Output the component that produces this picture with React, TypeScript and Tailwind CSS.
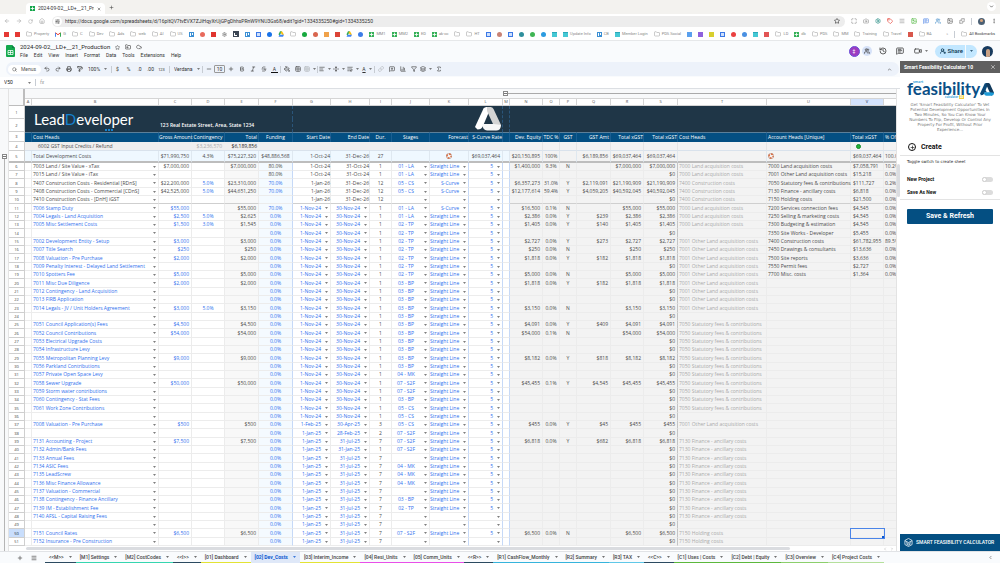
import React from 'react';
import {
  AlignLeft, ArrowLeft, ArrowRight, BarChart3, Bold, Camera, ChevronDown, ChevronLeft, ChevronUp, CloudCheck, Filter,
  Folder, FolderInput, Grid2x2, History, Home, Image, Italic, Layers, Link, Maximize, Menu, MessageSquareText, Minus,
  MoreVertical, PaintBucket, PaintRoller, Plus, Printer, Puzzle, Redo2, RotateCw, Search, Settings, Sigma, SlidersHorizontal,
  Star, Strikethrough, TableCellsMerge, Undo2, UserRoundPlus, Users, Video, WrapText, X, MessageSquarePlus, FoldVertical, Tag,
} from 'lucide-react';

type IconType = React.ComponentType<{ className?: string; strokeWidth?: number }>;

/* ---------- sheet data ---------- */

const LA = '7000 Land acquisition costs';
const OTHER = '7001 Other Land acquisition costs';
const STAT = '7050 Statutory fees & contributions';
const FIN = '7130 Finance - ancillary costs';
const HOLD = '7150 Holding costs';
const CON = '7400 Construction costs';

// name, gross, contingency, total, stage, cost head, [equity, tdc, gst, gst amt, total]
type Row = [string, string, string, string, string, string, string[]?];

const rows: Row[] = [
  ['7003 Land / Site Value - xTax', '$7,000,000', '', '$7,000,000', '01 - LA', LA, ['$1,400,000', '9.3%', 'N', '', '$7,000,000']],
  ['7015 Land / Site Value - iTax', '', '', '', '01 - LA', LA],
  ['7407 Construction Costs - Residential [RDnS]', '$22,200,000', '5.0%', '$23,310,000', '05 - CS', CON, ['$6,357,273', '31.0%', 'Y', '$2,119,091', '$21,190,909']],
  ['7408 Construction Costs - Commercial [CDnS]', '$42,525,000', '5.0%', '$44,651,250', '05 - CS', CON, ['$12,177,614', '59.4%', 'Y', '$4,059,205', '$40,592,045']],
  ['7410 Construction Costs - [DnH] iGST', '', '', '', '', CON],
  ['7006 Stamp Duty', '$55,000', '', '$55,000', '01 - LA', LA, ['$16,500', '0.1%', 'N', '', '$55,000']],
  ['7004 Legals - Land Acquisition', '$2,500', '5.0%', '$2,625', '01 - LA', LA, ['$2,386', '0.0%', 'Y', '$239', '$2,386']],
  ['7005 Misc Settlement Costs', '$1,500', '3.0%', '$1,545', '02 - TP', LA, ['$1,405', '0.0%', 'Y', '$140', '$1,405']],
  ['', '', '', '', '02 - TP', ''],
  ['7002 Development Entity - Setup', '$3,000', '', '$3,000', '02 - TP', OTHER, ['$2,727', '0.0%', 'Y', '$273', '$2,727']],
  ['7007 Title Search', '$250', '', '$250', '02 - TP', OTHER, ['$250', '0.0%', 'N', '', '$250']],
  ['7008 Valuation - Pre Purchase', '$2,000', '', '$2,000', '02 - TP', OTHER, ['$1,818', '0.0%', 'Y', '$182', '$1,818']],
  ['7009 Penalty Interest - Delayed Land Settlement', '', '', '', '02 - TP', OTHER],
  ['7010 Spotters Fee', '$5,000', '', '$5,000', '02 - TP', OTHER, ['$5,000', '0.0%', 'N', '', '$5,000']],
  ['7011 Misc Due Diligence', '$2,000', '', '$2,000', '03 - BP', OTHER, ['$1,818', '0.0%', 'Y', '$182', '$1,818']],
  ['7012 Contingency - Land Acquisition', '', '', '', '03 - BP', OTHER],
  ['7013 FIRB Application', '', '', '', '03 - BP', OTHER],
  ['7014 Legals - JV / Unit Holders Agreement', '$3,000', '5.0%', '$3,150', '03 - BP', OTHER, ['$3,150', '0.0%', 'N', '', '$3,150']],
  ['', '', '', '', '03 - BP', ''],
  ['7051 Council Application(s) Fees', '$4,500', '', '$4,500', '03 - BP', STAT, ['$4,091', '0.0%', 'Y', '$409', '$4,091']],
  ['7052 Council Contributions', '$54,000', '', '$54,000', '03 - BP', STAT, ['$54,000', '0.1%', 'N', '', '$54,000']],
  ['7053 Electrical Upgrade Costs', '', '', '', '03 - BP', STAT],
  ['7054 Infrastructure Levy', '', '', '', '03 - BP', STAT],
  ['7055 Metropolitan Planning Levy', '$9,000', '', '$9,000', '03 - BP', STAT, ['$8,182', '0.0%', 'Y', '$818', '$8,182']],
  ['7056 Parkland Contributions', '', '', '', '03 - BP', STAT],
  ['7057 Private Open Space Levy', '', '', '', '04 - MK', STAT],
  ['7058 Sewer Upgrade', '$50,000', '', '$50,000', '07 - S2F', STAT, ['$45,455', '0.1%', 'Y', '$4,545', '$45,455']],
  ['7059 Storm water contributions', '', '', '', '07 - S2F', STAT],
  ['7060 Contingency - Stat Fees', '', '', '', '03 - BP', STAT],
  ['7061 Work Zone Contributions', '', '', '', '05 - CS', STAT],
  ['', '', '', '', '05 - CS', ''],
  ['7008 Valuation - Pre Purchase', '$500', '', '$500', '05 - CS', OTHER, ['$455', '0.0%', 'Y', '$45', '$455']],
  ['', '', '', '', '07 - S2F', ''],
  ['7131 Accounting - Project', '$7,500', '', '$7,500', '07 - S2F', FIN, ['$6,818', '0.0%', 'Y', '$682', '$6,818']],
  ['7132 Admin/Bank Fees', '', '', '', '07 - S2F', FIN],
  ['7133 Annual Fees', '', '', '', '', FIN],
  ['7134 ASIC Fees', '', '', '', '04 - MK', FIN],
  ['7135 LeadScrew', '', '', '', '04 - MK', FIN],
  ['7136 Misc Finance Allowance', '', '', '', '04 - MK', FIN],
  ['7137 Valuation - Commercial', '', '', '', '', FIN],
  ['7138 Contingency - Finance Ancillary', '', '', '', '03 - BP', FIN],
  ['7139 IM - Establishment Fee', '', '', '', '02 - TP', FIN],
  ['7140 AFSL - Capital Raising Fees', '', '', '', '', FIN],
  ['', '', '', '', '', ''],
  ['7151 Council Rates', '$6,500', '', '$6,500', '07 - S2F', HOLD, ['$6,500', '0.0%', 'N', '', '$6,500']],
  ['7152 Insurance - Pre Construction', '', '', '', '', HOLD],
];

const accounts = [
  [LA, '$7,058,791', '10.2%'],
  [OTHER, '$15,218', '0.0%'],
  [STAT, '$111,727', '0.2%'],
  [FIN, '$6,818', '0.0%'],
  [HOLD, '$21,500', '0.0%'],
  ['7200 Services connection fees', '$4,545', '0.0%'],
  ['7250 Selling & marketing costs', '$4,545', '0.0%'],
  ['7300 Budgeting & estimation', '$4,545', '0.0%'],
  ['7350 Site Works - Developer', '$5,455', '0.0%'],
  [CON, '$61,782,955', '89.5%'],
  ['7450 Drawings & consultants', '$13,636', '0.0%'],
  ['7500 Site reports', '$3,636', '0.0%'],
  ['7550 Permit fees', '$2,727', '0.0%'],
  ['7700 Misc. costs', '$1,364', '0.0%'],
];

const schedule = (n: number): [string, string, string] => {
  if (n <= 7) return ['1-Oct-24', '31-Oct-24', '1'];
  if (n <= 10) return ['1-Jan-26', '31-Dec-26', '12'];
  if (n <= 36) return ['1-Nov-24', '30-Nov-24', '1'];
  if (n === 37) return ['1-Feb-25', '30-Apr-25', '3'];
  if (n === 38) return ['1-Jan-25', '28-Feb-25', '2'];
  if (n === 40) return ['1-Jan-25', '31-Jan-25', '1'];
  return ['1-Jan-25', '31-Jul-25', '7'];
};

const funding = (n: number) => (n <= 7 ? '80.0%' : n === 10 ? '' : n <= 11 ? '70.0%' : '0.0%');

const forecast = (n: number) => {
  if ([10, 48, 49, 51].includes(n)) return '';
  return [8, 9, 11].includes(n) ? 'S-Curve' : 'Straight Line';
};

const columns: [string, string][] = [
  ['A', 'w-[7px]'], ['B', 'w-[127px]'], ['C', 'w-[33px]'], ['D', 'w-[33px]'], ['E', 'w-[34px]'], ['F', 'w-[34px]'],
  ['G', 'w-[38px]'], ['H', 'w-[39px]'], ['I', 'w-[22px]'], ['J', 'w-[38px]'], ['K', 'w-[39px]'], ['L', 'w-[34px]'],
  ['M', 'w-[7px]'], ['N', 'w-[33px]'], ['O', 'w-[17px]'], ['P', 'w-[17px]'], ['Q', 'w-[34px]'], ['R', 'w-[33px]'],
  ['S', 'w-[34px]'], ['T', 'w-[89px]'], ['U', 'w-[84px]'], ['V', 'w-[33px]'], ['', 'w-[33px]'],
];

/* ---------- small pieces ---------- */

const Caret = ({ className = 'text-[#555]' }: { className?: string }) => (
  <svg viewBox="0 0 4 2" className={`w-[3px] h-[2px] shrink-0 ${className}`}><path d="M0 0h4L2 2z" fill="currentColor" /></svg>
);

const Sep = () => <span className="w-px h-[7px] bg-[#c7ccd3] shrink-0" />;

const Triangle = ({ className, light }: { className: string; light?: boolean }) => (
  <svg viewBox="0 0 52 48" className={className}>
    <path d="M0 40 L17 3 Q19 0 23 0 H32 L16 38 Q13 45 5 45 Z" fill={light ? '#ffffff' : '#0b4a7a'} />
    <path d="M24 0 H31 Q35 0 37 4 L52 36 L42 47 L24 8 Z" fill={light ? '#d4d4d4' : '#123a5c'} />
    <path d="M14 34 H38 L52 36 Q52 47 42 47 H24 Q16 47 14 34 Z" fill={light ? '#f7f7f7' : '#1d9ad6'} />
    {light ? null : <path d="M2 45 L14 20 L26 34 H14 Q12 45 2 45 Z" fill="#0b4a7a" />}
  </svg>
);

const Lifebuoy = () => (
  <svg viewBox="0 0 24 24" className="size-[6px] inline-block">
    <circle cx="12" cy="12" r="8" fill="none" stroke="#f3e3da" strokeWidth="6" />
    <circle cx="12" cy="12" r="8" fill="none" stroke="#dd6a3c" strokeWidth="6" strokeDasharray="7 5.500" strokeDashoffset="3.500" />
    <circle cx="12" cy="12" r="11" fill="none" stroke="#9c6a55" strokeWidth="1.500" />
  </svg>
);

const SheetsLogo = ({ className }: { className: string }) => (
  <svg viewBox="0 0 18 24" className={className}>
    <path d="M2 0h10l6 6v16a2 2 0 0 1-2 2H2a2 2 0 0 1-2-2V2a2 2 0 0 1 2-2z" fill="#12a84c" />
    <path d="M12 0l6 6h-6z" fill="#0b8043" />
    <path d="M4 11h10v8H4zM4 15h10M9 11v8" fill="none" stroke="#fff" strokeWidth="1.500" />
  </svg>
);

/* ---------- browser chrome ---------- */

const TabStrip = () => (
  <div className="h-[14px] bg-[#f3f2ef] flex items-end pl-[26px] pr-1 shrink-0">
    <div className="h-[11px] w-[79px] bg-white rounded-t-[4px] flex items-center gap-[3px] px-1 text-[5px] leading-none text-[#333]">
      <span className="w-[5px] h-[5px] bg-[#14a54a] flex items-center justify-center shrink-0"><Plus className="size-[5px] text-white" strokeWidth={4} /></span>
      <span className="flex-1 overflow-hidden whitespace-nowrap">2024-09-02__LD+__21_Prod</span>
      <button aria-label="Close tab"><X className="size-[4px]" strokeWidth={3} /></button>
    </div>
    <button aria-label="New tab" className="mb-[4px] ml-[4px]"><Plus className="size-[5px] text-[#444]" strokeWidth={2.5} /></button>
    <button aria-label="Search tabs" className="ml-auto mb-[3px] size-[9px] rounded-full bg-white flex items-center justify-center"><ChevronDown className="size-[5px] text-[#333]" strokeWidth={3} /></button>
  </div>
);

const extensions: [IconType, string][] = [
  [Maximize, 'text-[#888]'], [Camera, 'text-[#999]'], [Settings, 'text-[#2c8f86]'], [Tag, 'text-[#e5392f]'], [Menu, 'text-[#999]'],
  [Image, 'text-[#57b947]'], [MessageSquareText, 'text-[#5b8fe8]'], [Users, 'text-[#4a90c8]'], [Image, 'text-[#666]'], [Puzzle, 'text-[#777]'],
];

const AddressBar = () => (
  <div className="h-[14px] bg-white flex items-center shrink-0 pl-[4px] pr-[3px]">
    <div className="w-[48px] flex items-center gap-[6px] text-[#999]">
      <button aria-label="Back"><ArrowLeft className="size-[6px]" /></button>
      <button aria-label="Forward"><ArrowRight className="size-[6px]" /></button>
      <button aria-label="Reload"><RotateCw className="size-[5px]" /></button>
      <button aria-label="Home"><Home className="size-[6px]" /></button>
    </div>
    <div className="flex-1 h-[11px] rounded-full bg-[#ededed] flex items-center pl-[1px] pr-[5px] gap-[3px]">
      <span className="size-[9px] bg-white rounded-full flex items-center justify-center shrink-0"><SlidersHorizontal className="size-[5px] text-[#444]" strokeWidth={2.5} /></span>
      <input
        aria-label="Address"
        className="flex-1 min-w-0 text-[5px] leading-[7px] text-[#333] outline-none"
        defaultValue="https://docs.google.com/spreadsheets/d/16pItQV7tvEVX7ZJiHqyXrUjGPgDhhsPRnW9YNU3Gx68/edit?gid=1334335250#gid=1334335250"
      />
      <button aria-label="Bookmark"><Star className="size-[6px] text-[#333]" strokeWidth={2.5} /></button>
    </div>
    <div className="flex items-center gap-[6px] pl-[6px]">
      {extensions.map(([Icon, color], i) => (
        <button key={i} aria-label={`Extension ${i + 1}`}><Icon className={`size-[6px] ${color}`} strokeWidth={2.5} /></button>
      ))}
      <Sep />
      <span className="size-[7px] rounded-full bg-[#4b6074] flex items-start justify-center"><span className="size-[3px] rounded-full bg-[#d9a47c] mt-px" /></span>
      <button aria-label="Browser menu"><MoreVertical className="size-[6px] text-[#555]" /></button>
    </div>
  </div>
);

// [kind, label]; kind is "f" for a folder, "m" for mail, "+" for a sheet, or a favicon colour class
const bookmarks: [string, string][] = [
  ['bg-[#e53935]', ''], ['bg-[#e53935]', ''], ['f', 'Property'], ['m', 'G'], ['f', 'C'], ['f', 'Dev'], ['f', 'Ads'], ['f', 'web'], ['f', 'AI'],
  ['f', 'US'], ['t', ''], ['bg-[#e86a5c] rounded-full', ''], ['bg-[#e0342e]', ''], ['g', ''], ['l', ''], ['t', ''], ['d', ''],
  ['bg-[#1a73e8] rounded-full', ''], ['dr', ''], ['f', ''], ['bg-[#18a93f] rounded-full', ''], ['bg-[#d9664f] rounded-full', ''], ['bg-[#f0a24a]', ''],
  ['bg-[#dc4437]', ''], ['dr', ''], ['bg-[#3d7de8] rounded-full', ''], ['+', 'MM1'], ['+', 'MM2'], ['+', 'ED'], ['+', 'ak-cc'], ['f', ''],
  ['f', 'HT'], ['d', ''], ['bg-[#c98375] rounded-full', ''], ['d', ''], ['bg-[#2f8f9c] rounded-full', ''], ['bg-[#3fb554] rounded-full', ''],
  ['bg-[#2b9be0] rounded-full', ''], ['c', ''], ['c', 'Update Info'], ['t', 'CB'], ['c', 'Member Login'], ['f', 'PDS Social'],
  ['bg-[#5aa0ee]', ''], ['bg-[#8f62dd]', ''], ['bg-[#d8cf2e]', ''], ['d', ''], ['bg-[#ea4040] rounded-full', ''], ['bg-[#4a90e2] rounded-full', ''], ['c', ''],
  ['bg-[#e25555]', ''], ['f', 'LD'], ['+', 'db'], ['f', 'PDS'], ['f', 'MM'], ['f', 'Training'], ['f', 'Travel'], ['bg-[#d8574c]', ''], ['f', 'BA'],
];

const Favicon = ({ kind }: { kind: string }) => {
  if (kind === 'f') return <Folder className="size-[6px] text-[#999]" strokeWidth={2} />;
  if (kind === 'g') return <Settings className="size-[5px] text-[#777]" strokeWidth={3} />;
  if (kind === 'm') {
    return (
      <svg viewBox="0 0 12 10" className="w-[6px] h-[5px]">
        <path d="M1 9.500V1.500" stroke="#4285f4" strokeWidth="2" />
        <path d="M1 1.500l5 4 5-4" fill="none" stroke="#ea4335" strokeWidth="2" />
        <path d="M11 9.500V1.500" stroke="#34a853" strokeWidth="2" />
      </svg>
    );
  }
  if (kind === 'dr') {
    return (
      <svg viewBox="0 0 12 11" className="w-[6px] h-[6px]">
        <path d="M4 0h4L3 9 1 6z" fill="#34a853" /><path d="M8 0l4 7H8L5 2z" fill="#fbbc04" /><path d="M3 7h9l-2 4H1z" fill="#4285f4" />
      </svg>
    );
  }
  if (kind === '+') return <span className="size-[5px] bg-[#35b057] flex items-center justify-center"><Plus className="size-[5px] text-white" strokeWidth={4} /></span>;
  if (kind === 'l') return <span className="size-[6px] bg-[#3c4654] flex items-center justify-center"><span className="size-[3px] border-l border-b border-white" /></span>;
  if (kind === 't') return <span className="size-[5px] bg-[#3b8fd4] border border-[#3b8fd4] flex gap-px"><span className="w-px h-[3px] bg-white" /><span className="w-px h-[2px] bg-white" /></span>;
  if (kind === 'd') return <span className="size-[5px] bg-[#cfe0fb] border border-[#3c78e6]" />;
  if (kind === 'c') return <span className="size-[5px] bg-[#45c8d4] border-t border-[#2ba7b8]" />;
  return <span className={`size-[5px] ${kind}`} />;
};

const BookmarkBar = () => (
  <nav className="h-[13px] bg-white border-b border-[#e6e8ea] flex items-center shrink-0 pl-[4px] pr-[5px] text-[4px] leading-none text-[#888]">
    <div className="flex-1 flex items-center justify-between">
      {bookmarks.map(([kind, label], i) => (
        <a key={i} href="#" aria-label={label || `Bookmark ${i + 1}`} className="flex items-center gap-[2px] whitespace-nowrap">
          <Favicon kind={kind} />
          {label && <span>{label}</span>}
        </a>
      ))}
    </div>
    <div className="pl-[14px] flex items-center gap-[6px]">
      <span>»</span>
      <Sep />
      <a href="#" className="flex items-center gap-[2px] text-[#444]"><Favicon kind="f" />All Bookmarks</a>
    </div>
  </nav>
);

/* ---------- sheets header ---------- */

const DocHeader = () => (
  <header className="h-[20px] flex items-center shrink-0 pl-[6px] pr-[7px]">
    <SheetsLogo className="w-[9px] h-[12px] mr-[5px]" />
    <div>
      <div className="flex items-center gap-[5px] h-[8px] text-[#444]">
        <h1 className="text-[6px] leading-[8px] text-[#1f1f1f]">2024-09-02__LD+__21_Production</h1>
        <Star className="size-[5px]" strokeWidth={2.5} /><FolderInput className="size-[6px]" strokeWidth={2.5} /><CloudCheck className="size-[6px]" strokeWidth={2.5} />
      </div>
      <div className="flex gap-[6px] text-[5px] leading-[8px] text-[#333]">
        {['File', 'Edit', 'View', 'Insert', 'Format', 'Data', 'Tools', 'Extensions', 'Help'].map(m => <button key={m}>{m}</button>)}
      </div>
    </div>
    <div className="ml-auto flex items-center">
      <span className="size-[11px] rounded-full bg-[#9c3cc0] border border-[#6a4fd8] text-white text-[5px] leading-none flex items-center justify-center">‡</span>
      <button aria-label="Active users" className="size-[10px] ml-[2px] rounded-full bg-[#d6e2f8] flex items-center justify-center"><Users className="size-[6px] text-[#444]" strokeWidth={3} /></button>
      <button aria-label="History" className="ml-[7px]"><History className="size-[8px] text-[#444]" strokeWidth={2.5} /></button>
      <button aria-label="Comments" className="ml-[9px]"><MessageSquareText className="size-[8px] text-[#444]" strokeWidth={2.5} /></button>
      <button aria-label="Call" className="ml-[10px] flex items-center gap-[3px]"><Video className="size-[8px] text-[#444]" strokeWidth={2.5} /><Caret /></button>
      <div className="ml-[7px] h-[13px] rounded-full bg-[#c2e7ff] flex items-center overflow-hidden text-[#0a3550]">
        <button className="h-full pl-[5px] pr-[2px] flex items-center gap-[2px] text-[6px] leading-none font-medium border-r border-[#f9fbfd]"><UserRoundPlus className="size-[6px]" strokeWidth={3} />Share</button>
        <button aria-label="Share options" className="h-full px-[4px]"><Caret className="text-[#0a3550]" /></button>
      </div>
      <span className="ml-[5px] size-[11px] rounded-full bg-[#173a5e] flex items-end justify-center overflow-hidden"><span className="w-[4px] h-[8px] rounded-t-full bg-[#c9a184]" /></span>
    </div>
  </header>
);

const Tool = ({ icon: Icon, label, caret, dim }: { icon: IconType; label: string; caret?: boolean; dim?: boolean }) => (
  <button aria-label={label} className={`h-[11px] flex items-center justify-center gap-[3px] shrink-0 ${caret ? 'w-[14px]' : 'w-[11px]'} ${dim ? 'text-[#b0b4b9]' : 'text-[#444]'}`}>
    <Icon className="size-[6px]" strokeWidth={2.5} />
    {caret && <Caret />}
  </button>
);

const TextTool = ({ children, label }: { children: React.ReactNode; label: string }) => (
  <button aria-label={label} className="w-[11px] text-center text-[5px] leading-none text-[#333]">{children}</button>
);

const Toolbar = () => (
  <div className="h-[14px] bg-[#edf2fa] rounded-full ml-[6px] mr-px mb-px flex items-center shrink-0 pl-[2px] pr-[7px]">
    <button className="h-[9px] w-[33px] rounded-full bg-white flex items-center gap-[4px] pl-[4px] text-[5px] leading-none text-[#555]"><Search className="size-[5px]" strokeWidth={2.5} />Menus</button>
    <Tool icon={Undo2} label="Undo" />
    <Tool icon={Redo2} label="Redo" />
    <Tool icon={Printer} label="Print" />
    <Tool icon={PaintRoller} label="Paint format" />
    <label className="w-[24px] flex items-center pl-[3px]">
      <select aria-label="Zoom" className="appearance-none w-[16px] text-[5px] leading-[7px] text-[#333]"><option>100%</option></select>
      <Caret />
    </label>
    <span className="w-[2px]" /><Sep />
    <TextTool label="Currency">$</TextTool>
    <TextTool label="Percent">%</TextTool>
    <TextTool label="Decrease decimals">.0</TextTool>
    <TextTool label="Increase decimals">.00</TextTool>
    <TextTool label="More formats"><span className="text-[4px]">123</span></TextTool>
    <span className="w-[2px]" /><Sep />
    <label className="w-[32px] flex items-center pl-[4px]">
      <select aria-label="Font" className="appearance-none w-[23px] text-[5px] leading-[7px] text-[#333]"><option>Verdana</option></select>
      <Caret />
    </label>
    <Sep />
    <Tool icon={Minus} label="Decrease font size" />
    <input aria-label="Font size" defaultValue="10" className="w-[11px] h-[8px] border border-[#999] rounded-[1px] text-center text-[5px] leading-none text-[#333]" />
    <Tool icon={Plus} label="Increase font size" />
    <Tool icon={Bold} label="Bold" />
    <Tool icon={Italic} label="Italic" />
    <Tool icon={Strikethrough} label="Strikethrough" />
    <button aria-label="Text color" className="w-[11px] flex justify-center text-[5px] leading-[6px] text-[#333]"><span className="px-[2px] border-b border-[#111]">A</span></button>
    <Sep />
    <Tool icon={PaintBucket} label="Fill color" />
    <Tool icon={Grid2x2} label="Borders" />
    <Tool icon={TableCellsMerge} label="Merge" caret dim />
    <Sep />
    <Tool icon={AlignLeft} label="Horizontal align" caret />
    <Tool icon={FoldVertical} label="Vertical align" caret />
    <Tool icon={WrapText} label="Wrap" caret />
    <button aria-label="Rotate text" className="w-[14px] flex items-center justify-center gap-[3px] text-[5px] leading-none text-[#333]"><span className="underline">A</span><Caret /></button>
    <Sep />
    <Tool icon={Link} label="Link" dim />
    <Tool icon={MessageSquarePlus} label="Comment" />
    <Tool icon={BarChart3} label="Chart" />
    <Tool icon={Filter} label="Filter" />
    <Tool icon={Layers} label="Views" caret />
    <Tool icon={Sigma} label="Functions" />
    <button aria-label="Hide menus" className="ml-auto"><ChevronUp className="size-[5px] text-[#333]" strokeWidth={2.5} /></button>
  </div>
);

const FormulaBar = () => (
  <div className="h-[12px] bg-white border-b border-[#dcdfe3] flex items-center shrink-0 pl-[4px] text-[5px] leading-none text-[#222]">
    <input aria-label="Name box" defaultValue="V50" className="w-[24px] text-[5px] leading-[7px]" />
    <Caret />
    <span className="w-[4px]" /><Sep />
    <label htmlFor="fx" className="pl-[4px] italic text-[#999]">fx</label>
    <input id="fx" aria-label="Formula" className="flex-1 ml-[4px] text-[5px]" />
  </div>
);

/* ---------- grid ---------- */

const line = 'border-r border-b border-[#ececec]';
const guide = 'border-b border-b-[#ececec] border-r border-r-[#c6d9f7]';
const blue = 'text-[#2f70ee]';

const RowHead = ({ n, className = '' }: { n: number; className?: string }) => (
  <th scope="row" className={`border-r border-b border-[#cfcfcf] text-[4px] font-medium text-center ${n === 50 ? 'bg-[#c9defc] text-[#123]' : 'bg-white text-[#444]'} ${className}`}>{n}</th>
);

const Drop = ({ text = '', label, align = 'justify-end' }: { text?: string; label: string; align?: string }) => (
  <button aria-label={text ? undefined : label} className={`w-full flex items-center pr-[2px] ${blue}`}>
    <span className={`flex-1 flex whitespace-nowrap ${align}`}>{text}</span>
    <span className="w-[7px] flex justify-end"><Caret /></span>
  </button>
);

const SheetRow = ({ row, n, index }: { row: Row; n: number; index: number }) => {
  const [name, gross, contingency, total, stage, head, gst = ['', '', '', '', '$0']] = row;
  const [start, end, duration] = schedule(n);
  const plan = forecast(n);
  const [account = '', amount = '', share = ''] = accounts[index] || [];
  const fixed = n <= 10;
  const grey = 'bg-[#f3f3f3]';
  const edge = n === 10 ? 'border-b-[#cfcfcf]' : '';
  return (
    <tr className={index % 3 === 2 ? 'h-[9px]' : 'h-[8px]'}>
      <RowHead n={n} />
      <td className={`${line} ${edge}`} />
      <td className={`${line} ${edge} pl-px`}>
        <button className="w-full flex items-center justify-between pr-[2px]" aria-label={name ? undefined : 'Choose cost head'}>
          <span className={`whitespace-nowrap ${fixed ? '' : blue}`}>{name}</span><Caret />
        </button>
      </td>
      <td className={`${line} ${edge} text-right pr-[2px] ${fixed ? '' : blue}`}>{gross}</td>
      <td className={`${line} ${edge} text-center ${blue}`}>{contingency}</td>
      <td className={`${line} ${edge} text-right pr-[2px] bg-[#f8f8f8]`}>{total}</td>
      <td className={`${guide} ${edge} text-center bg-[#f4faff] ${n <= 7 ? '' : blue}`}>{funding(n)}</td>
      <td className={`${line} ${edge} text-right`}>{fixed ? start : <Drop text={start} label="Start date" />}</td>
      <td className={`${line} ${edge} text-right`}>{fixed ? end : <Drop text={end} label="End date" />}</td>
      <td className={`${line} ${edge} text-center`}>{duration}</td>
      <td className={`${line} ${edge}`}><Drop text={stage} label="Stage" align="justify-center" /></td>
      <td className={`${guide} ${edge}`}><Drop text={plan} label="Forecast" /></td>
      <td className={`${guide} ${edge}`}><Drop text={plan && '5'} label="S-Curve rate" /></td>
      <td className={guide} />
      <td className={`${line} ${edge} ${grey} text-right pr-[2px]`}>{gst[0]}</td>
      <td className={`${line} ${edge} ${grey} text-center`}>{gst[1]}</td>
      <td className={`${line} ${edge} ${grey} text-center`}>{gst[2]}</td>
      <td className={`${line} ${edge} ${grey} text-right pr-[2px]`}>{gst[3]}</td>
      <td className={`${line} ${edge} ${grey} text-right pr-[2px]`}>{gst[4] === '$0' ? '' : gst[4]}</td>
      <td className={`${line} ${edge} ${grey} text-right pr-[2px] border-r-[#c4c4c4]`}>{gst[4]}</td>
      <td className={`${line} ${edge} ${grey} pl-px text-[#a9a9a9]`}>{head}</td>
      <td className={`${line} ${edge} ${grey} pl-px`}>{account}</td>
      <td className={`${line} ${edge} ${grey} pl-[2px] ${n === 50 ? 'outline outline-[#4a84e8] relative' : ''}`}>
        {amount}
        {n === 50 && <span className="absolute -right-px -bottom-px size-[2px] bg-[#0b57d0]" />}
      </td>
      <td className={`${line} ${edge} ${grey} pl-px`}>{share}</td>
    </tr>
  );
};

const headings: [string, string][] = [
  ['', ''], ['Cost Heads', 'pl-px'], ['Gross Amount', 'text-right'], ['Contingency', 'text-center'], ['Total', 'text-right pr-px'], ['Funding', 'text-center'],
  ['Start Date', 'text-right'], ['End Date', 'text-right'], ['Dur.', 'text-center'], ['Stages', 'text-center'], ['Forecast', 'text-right'], ['S-Curve Rate', 'text-right'],
  ['', ''], ['Dev. Equity', 'text-right pr-px'], ['TDC %', 'text-center'], ['GST', 'text-center'], ['GST Amt', 'text-right pr-px'], ['Total xGST', 'text-right'],
  ['Total xGST', 'text-right'], ['Cost Heads', 'pl-px'], ['Account Heads [Unique]', 'pl-px'], ['Total xGST', 'pl-px'], ['% Of', 'pl-px'],
];

const totals: [React.ReactNode, string][] = [
  ['', ''], ['Total Development Costs', 'pl-px'], ['$71,990,750', 'text-right pr-[2px]'], ['4.3%', 'text-center'], ['$75,227,320', 'text-right pr-[2px]'],
  ['$48,886,568', 'text-center'], ['1-Oct-24', 'text-right'], ['31-Dec-26', 'text-right'], ['27', 'text-center'], ['', ''], [<Lifebuoy />, 'text-center'],
  ['$69,037,464', 'text-right pr-[2px]'], ['', ''], ['$20,150,895', 'text-right pr-[2px]'], ['100%', 'text-center'], ['', ''], ['$6,189,856', 'text-right pr-[2px]'],
  ['$69,037,464', 'text-right pr-[2px]'], ['$69,037,464', 'text-right pr-[2px]'], ['', ''], [<Lifebuoy />, 'pl-px'], ['$69,037,464', 'pl-[2px]'], ['100.0%', 'pl-px'],
];

const credits: Record<number, [React.ReactNode, string]> = {
  1: ['6002 GST Input Credits / Refund', 'pl-[6px]'],
  3: ['$3,236,570', 'text-right pr-[3px] text-[#aaa]'],
  4: ['$6,189,856', 'text-right pr-[2px] text-[#222]'],
  21: [<span className="block size-[5px] rounded-full bg-[#23b33a] border border-[#118a26]" />, 'pl-[5px]'],
};

const Sheet = () => (
  <table className="table-fixed w-[908px] border-separate border-spacing-0 bg-white text-[5px] leading-[7px] text-[#4a4a4a] font-['Open_Sans','DejaVu_Sans',sans-serif] [&_td]:whitespace-nowrap [&_td]:align-middle [&_svg]:align-middle">
    <colgroup>
      <col className="w-[16px]" />
      {columns.map(([, width], i) => <col key={i} className={width} />)}
    </colgroup>
    <thead>
      <tr className="h-[8px] text-[4px] leading-[6px] text-[#555]">
        <th className="bg-[#f8f9fa] border-r-2 border-b border-[#bdbdbd]" />
        {columns.map(([id], i) => (
          <th key={i} className={`font-medium border-r border-y border-[#d5d5d5] ${id === 'V' ? 'bg-[#d3e3fd] text-[#123]' : 'bg-white'}`}>{id}</th>
        ))}
      </tr>
    </thead>
    <tbody>
      <tr className="h-[13px] bg-[#1f3647]">
        <RowHead n={1} />
        <td rowSpan={2} />
        <td rowSpan={2} className="relative">
          <div className="text-[15px] leading-[18px] text-white pl-[2px] font-['Lato','Open_Sans',sans-serif]">Lead<span className="text-[#1583d0]">D</span>eveloper</div>
          <div className="absolute left-[73px] bottom-[1px] flex gap-px"><i className="size-[2px] bg-[#1583d0]" /><i className="size-[2px] bg-[#1583d0]" /><i className="size-[2px] bg-[#1583d0]" /></div>
        </td>
        <td colSpan={4} className="border-r border-dashed border-[#2a557a]" />
        <td colSpan={6} rowSpan={2} className="border-r border-dashed border-[#2a557a]"><Triangle light className="w-[26px] h-[24px] ml-auto mr-px" /></td>
        <td rowSpan={2} className="border-r border-dashed border-[#2a557a]" />
        <td colSpan={10} rowSpan={2} />
      </tr>
      <tr className="h-[13px] bg-[#1f3647]">
        <RowHead n={2} />
        <td colSpan={4} className="pl-px text-white font-semibold border-r border-dashed border-[#2a557a]">123 Real Estate Street, Area, State 1234</td>
      </tr>
      <tr className="h-[10px] bg-[#044f82] text-white">
        <RowHead n={3} />
        {headings.map(([text, cls], i) => <td key={i} className={`font-medium border-t border-t-[#5b7f99] border-r border-r-[#1a5f92] ${cls}`}>{text}</td>)}
      </tr>
      <tr className="h-[9px] bg-[#efefef]">
        <RowHead n={4} />
        {headings.map((_, i) => <td key={i} className={`border-b border-[#d9e2ec] ${i > 12 ? 'border-r border-r-[#e6e6e6] bg-[#f3f3f3]' : ''} ${credits[i]?.[1] || ''}`}>{credits[i]?.[0]}</td>)}
      </tr>
      <tr className="h-[12px] bg-[#eff8ff]">
        <RowHead n={5} className="border-b-2 border-b-[#bdbdbd]" />
        {totals.map(([text, cls], i) => <td key={i} className={`border-r border-r-[#dfe8f0] border-b-2 border-b-[#bdbdbd] ${i > 12 ? 'bg-[#f3f3f3]' : ''} ${cls}`}>{text}</td>)}
      </tr>
      {rows.map((row, i) => <SheetRow key={i} row={row} n={i + 6} index={i} />)}
    </tbody>
  </table>
);

const Fold = () => (
  <button aria-label="Collapse group" className="w-[5px] h-[5px] border border-[#888] bg-white flex items-center justify-center shrink-0"><span className="w-[3px] h-px bg-[#777]" /></button>
);

const Grid = () => (
  <div className="flex-1 min-h-0 flex bg-[#f8f9fa]">
    <div className="w-[9px] shrink-0 flex flex-col items-center border-r border-[#e3e3e3] pt-[65px]">
      <Fold />
      <span className="flex-1 w-px bg-[#b5b5b5]" />
    </div>
    <div className="flex-1 min-w-0 flex flex-col overflow-hidden">
      <div className="h-[9px] shrink-0 flex">
        <span className="w-[16px] border-r-2 border-[#bdbdbd]" />
        <div className="flex-1 flex items-center pl-[478px]"><Fold /><span className="flex-1 h-px bg-[#aaa]" /></div>
      </div>
      <div className="flex-1 min-h-0 overflow-hidden"><Sheet /></div>
      <div className="h-[5px] shrink-0 flex items-center bg-white pl-[17px] pr-[2px]">
        <span className="h-[3px] w-[88%] rounded-full bg-[#dadce0]" />
        <span className="ml-auto flex gap-[3px]"><ChevronLeft className="size-[4px] text-[#888]" /><ChevronLeft className="size-[4px] text-[#888] rotate-180" /></span>
      </div>
    </div>
    <div className="w-[4px] shrink-0 bg-white border-l border-[#e3e3e3] pt-[75px]">
      <div className="w-[3px] h-[33px] rounded-full bg-[#dadce0]" />
    </div>
  </div>
);

const sheetTabs: [string, string][] = [
  ['<<M>>', 'border-[#2b4a60]'], ['[M1] Settings', 'border-[#36d6b0]'], ['[M2] CostCodes', 'border-[#36d6b0]'], ['<<I>>', 'border-[#2b4a60]'],
  ['[01] Dashboard', 'border-[#e3e334]'], ['[02] Dev_Costs', 'border-[#dfe8f8]'], ['[03] Interim_Income', 'border-[#e3e334]'],
  ['[04] Resi_Units', 'border-[#e84fe8]'], ['[05] Comm_Units', 'border-[#e84fe8]'], ['<<R>>', 'border-[#2b4a60]'],
  ['[R1] CashFlow_Monthly', 'border-[#36b4dc]'], ['[R2] Summary', 'border-[#36b4dc]'], ['[R3] TAX', 'border-[#5fc8e8]'], ['<<C>>', 'border-[#2b4a60]'],
  ['[C1] Uses | Costs', 'border-[#5cb83c]'], ['[C2] Debt | Equity', 'border-[#5cb83c]'], ['[C3] Overview', 'border-[#8ccf6c]'], ['[C4] Project Costs', 'border-[#b5e09c]'],
];

const SheetTabs = () => (
  <footer className="h-[12px] shrink-0 bg-[#f9fbfd] border-t border-[#e1e3e6] flex items-stretch pl-[17px] pr-[7px] text-[5px] leading-none text-[#444]">
    <button aria-label="Add sheet"><Plus className="size-[6px]" strokeWidth={2.5} /></button>
    <button aria-label="All sheets" className="pl-[8px] pr-[8px]"><Menu className="size-[6px]" strokeWidth={2.5} /></button>
    {sheetTabs.map(([name, color]) => (
      <button key={name} className={`flex items-center gap-[5px] px-[4px] border-b whitespace-nowrap ${color} ${name.includes('Dev_Costs') ? 'bg-[#dfe8f8] text-[#0b57d0] font-bold' : 'font-medium'}`}>
        {name}<Caret className="text-current" />
      </button>
    ))}
    <button aria-label="Show side panel" className="ml-auto"><ChevronLeft className="size-[5px]" strokeWidth={2.5} /></button>
  </footer>
);

/* ---------- add-on side panel ---------- */

const Switch = ({ id, label }: { id: string; label: string }) => (
  <div className="h-[13px] flex items-center justify-between">
    <label htmlFor={id} className="text-[5px] leading-none font-bold text-[#111]">{label}</label>
    <input id={id} type="checkbox" className="appearance-none w-[11px] h-[5px] rounded-full bg-[#dcdcdc] before:block before:size-[5px] before:rounded-full before:bg-white before:border before:border-[#d0d0d0]" />
  </div>
);

const SidePanel = () => (
  <aside className="w-[100px] shrink-0 bg-white flex flex-col">
    <div className="h-[12px] bg-[#5f5f5f] text-white flex items-center justify-between px-[4px] text-[5px] leading-none font-bold">
      Smart Feasibility Calculator 10
      <button aria-label="Close panel"><X className="size-[6px]" /></button>
    </div>
    <div className="px-[7px] pt-[6px] flex items-center justify-between">
      <div className="relative font-['Lato',sans-serif] font-bold text-[#0a4f86]">
        <div className="text-[17px] leading-[20px]">feasibility</div>
        <span className="absolute left-[6px] top-px text-[4px] leading-[4px] text-[#1d9ad6]">smart</span>
        <span className="absolute left-[38px] bottom-0 text-[3px] leading-[3px] text-[#1d9ad6] whitespace-nowrap">calculator <b className="bg-[#f3cf3f] text-white px-px">10</b></span>
      </div>
      <Triangle className="w-[14px] h-[13px] shrink-0" />
    </div>
    <p className="px-[5px] pt-[3px] text-center text-[4px] leading-[5px] text-[#777] font-['DejaVu_Sans',sans-serif] whitespace-nowrap">
      Get 'Smart Feasibility Calculator' To Vet<br />Potential Development Opportunities In<br />Two Minutes, So You Can Know Your<br />
      Numbers To Flip, Develop Or Control Any<br />Property For Profit, Without Prior<br />Experience...
    </p>
    <button className="mt-[10px] px-[8px] h-[10px] flex items-center gap-[5px] text-[7px] leading-none font-bold text-[#111]">
      <span className="size-[8px] rounded-full border border-[#111] flex items-center justify-center"><Plus className="size-[5px]" strokeWidth={3} /></span>
      Create
    </button>
    <div className="mt-[3px] border-y border-[#e3e3e3] px-[7px] pt-[3px]">
      <p className="text-[4px] leading-[6px] text-[#222] mb-[8px] font-['DejaVu_Sans',sans-serif]">Toggle switch to create sheet</p>
      <Switch id="new-project" label="New Project" />
      <Switch id="save-as-new" label="Save As New" />
    </div>
    <button className="mx-[7px] mt-[9px] h-[15px] rounded-[1px] bg-[#044f82] text-white text-[7px] leading-none font-bold">Save &amp; Refresh</button>
    <div className="mt-auto h-[17px] bg-[#044f82] text-white flex items-center gap-[3px] px-[4px] text-[5px] leading-none font-medium whitespace-nowrap">
      <svg viewBox="0 0 20 20" className="size-[9px] shrink-0" fill="none" stroke="#fff" strokeWidth="1.600">
        <path d="M10 1l8 4.500v9L10 19l-8-4.500v-9z" /><path d="M2 6l8 4 8-4M5 10l5 3 5-3M5 13l5 3 5-3" />
      </svg>
      SMART FEASIBILITY CALCULATOR
    </div>
  </aside>
);

export default function App() {
  return (
    <div className="h-screen flex flex-col overflow-hidden bg-[#f9fbfd] font-['Roboto','Liberation_Sans',sans-serif]">
      <TabStrip />
      <AddressBar />
      <BookmarkBar />
      <DocHeader />
      <div className="flex-1 min-h-0 flex">
        <main className="flex-1 min-w-0 flex flex-col pt-px">
          <Toolbar />
          <FormulaBar />
          <Grid />
        </main>
        <SidePanel />
      </div>
      <SheetTabs />
    </div>
  );
}
